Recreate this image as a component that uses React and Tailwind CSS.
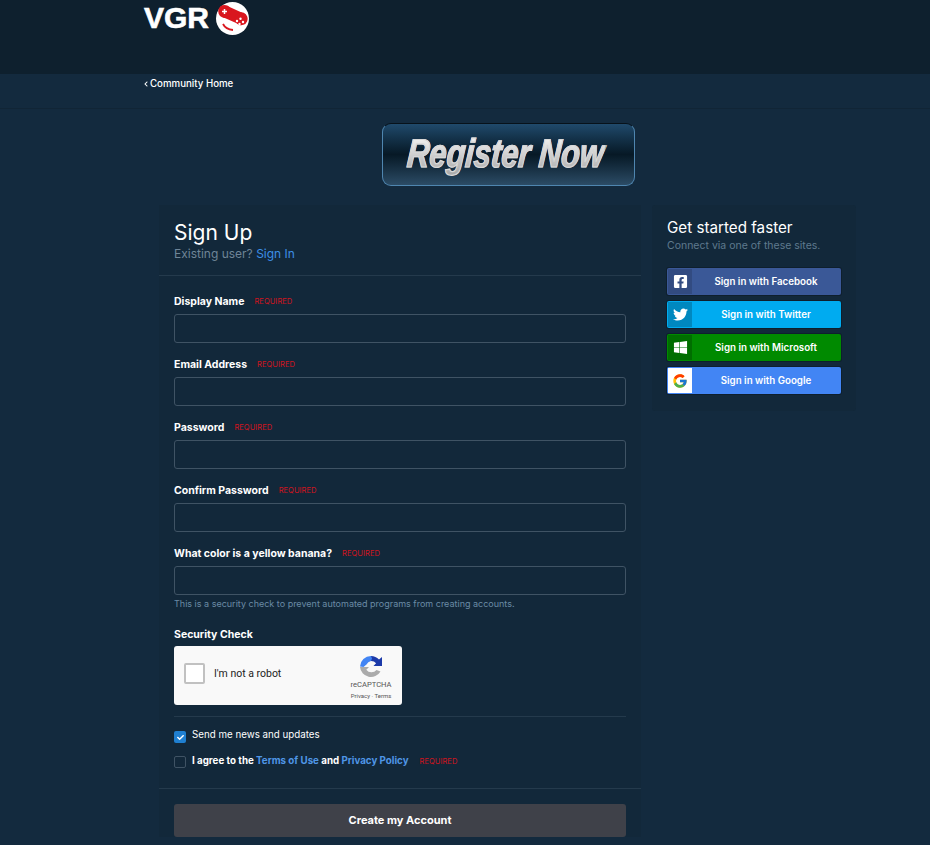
import React from "react";
import { FaFacebookSquare, FaTwitter, FaWindows, FaChevronLeft, FaCheck } from "react-icons/fa";
import { FcGoogle } from "react-icons/fc";

const fields = [
  { label: "Display Name" },
  { label: "Email Address" },
  { label: "Password" },
  { label: "Confirm Password" },
  { label: "What color is a yellow banana?" },
];

const socials = [
  { label: "Sign in with Facebook", bg: "bg-[#3a5897]", iconBg: "bg-[#324b81]", icon: <FaFacebookSquare className="text-[15px] text-white" /> },
  { label: "Sign in with Twitter", bg: "bg-[#00abf0]", iconBg: "bg-[#0088bf]", icon: <FaTwitter className="text-[15px] text-white" /> },
  { label: "Sign in with Microsoft", bg: "bg-[#008a00]", iconBg: "bg-[#006e00]", icon: <FaWindows className="text-[15px] text-white" /> },
  { label: "Sign in with Google", bg: "bg-[#4285f4]", iconBg: "bg-white", icon: <FcGoogle className="text-[16px]" /> },
];

function Required() {
  return <span className="text-[7.6px] font-normal uppercase text-[#d0141e]">Required</span>;
}

function ControllerLogo() {
  return (
    <svg width="33" height="33" viewBox="0 0 33 33" className="ml-[7px] mt-[2px]">
      <circle cx="16.5" cy="16.5" r="16.5" fill="#fff" />
      <g fill="#d9161e" transform="rotate(24 16.5 14)">
        <rect x="5" y="7" width="23" height="12" rx="4" />
        <circle cx="7.5" cy="13" r="6.5" />
        <circle cx="25.5" cy="13" r="6.5" />
      </g>
      <path d="M6 9.5h5M8.5 7v5" stroke="#fff" strokeWidth="1.5" />
      <circle cx="21" cy="19" r="1.2" fill="#fff" />
      <circle cx="24.5" cy="16.8" r="1.2" fill="#fff" />
      <circle cx="23.5" cy="22" r="1.2" fill="#fff" />
      <circle cx="27" cy="20" r="1.2" fill="#fff" />
      <path d="M7 22c1.5 3 5 5.5 10 6" fill="none" stroke="#d9161e" strokeWidth="1.8" />
    </svg>
  );
}

function RecaptchaLogo() {
  return (
    <svg width="24" height="24" viewBox="0 0 24 24">
      <path d="M12 1a11 11 0 0 1 8 3.5L23 2v9h-8.5l2.6-2.8A6.5 6.5 0 0 0 12 6z" fill="#1c3aa9" />
      <path d="M12 1A11 11 0 0 0 1 11.5l3.5.5 3-2.5A6.5 6.5 0 0 1 12 6l1-2.5z" fill="#4285f4" />
      <path d="M1 12h9l-2.7 2.7A6.5 6.5 0 0 0 17.5 15l4 1.5A11 11 0 0 1 1 12z" fill="#ababab" />
    </svg>
  );
}

export default function App() {
  return (
    <div className="h-[845px] overflow-hidden bg-[#132a3e] font-['Inter',sans-serif] text-white">
      <header className="h-[74px] bg-[#0e202e] pl-[144px]">
        <div className="flex items-start">
          <span className="mt-[3px] block h-[30px] font-['Liberation_Sans',sans-serif] text-[30px] font-bold leading-[30px] text-white [-webkit-text-stroke:0.6px_white]">
            VGR
          </span>
          <ControllerLogo />
        </div>
      </header>

      <nav className="h-[35px] border-b border-[#112536] pl-[144px] pt-[2px]">
        <a className="-ml-px flex items-center gap-[1px] text-[9.7px] font-medium leading-[16px] text-white">
          <FaChevronLeft className="text-[6px]" />
          Community Home
        </a>
      </nav>

      <div className="flex justify-center pl-[87px] pt-[14px]">
        <div className="flex h-[63px] w-[253px] items-center justify-center overflow-hidden rounded-[9px] border border-[#4f86b0] border-t-[#07121b] bg-gradient-to-b from-[#204a6c] via-[#071926] to-[#2c4c66]">
          <span className="mb-[4px] mr-[6px] inline-block -skew-x-6 scale-x-[0.77] whitespace-nowrap bg-gradient-to-b from-white to-[#a8a8a8] bg-clip-text font-['Liberation_Sans',sans-serif] text-[40px] font-bold italic leading-[44px] text-transparent [-webkit-text-stroke:1.2px_#d8d8d8]">
            Register Now
          </span>
        </div>
      </div>

      <main className="flex items-start gap-[11px] pl-[159px] pt-[19px]">
        <section className="w-[482px] bg-[#12283a]">
          <div className="h-[71px] border-b border-[#243a4c] px-[15px] pt-[14px]">
            <h1 className="text-[21px] font-normal leading-[28px]">Sign Up</h1>
            <p className="text-[12px] leading-[14px] text-[#6f8597]">
              Existing user? <a className="text-[#3d8fe6]">Sign In</a>
            </p>
          </div>

          <form className="px-[15px] pt-[18px]">
            {fields.map((field) => (
              <div key={field.label} className="mb-[14px]">
                <div className="mb-[4px] flex h-[16px] items-center gap-[10px]">
                  <label className="text-[10.5px] font-bold">{field.label}</label>
                  <Required />
                </div>
                <input
                  type="text"
                  className="block h-[29px] w-full rounded-[3px] border border-[#3f5364] bg-transparent"
                />
              </div>
            ))}
            <p className="-mt-[12px] text-[9px] leading-[14px] text-[#6a8ba5]">
              This is a security check to prevent automated programs from creating accounts.
            </p>

            <div className="mt-[16px] text-[10.5px] font-bold leading-[16px]">Security Check</div>
            <div className="mt-[3px] flex h-[59px] w-[228px] items-center rounded-[3px] bg-[#f9f9f9] pl-[10px] pr-[9px]">
              <div className="mb-[4px] h-[21px] w-[21px] rounded-[2px] border-2 border-[#c1c1c1] bg-white" />
              <span className="mb-[4px] ml-[9px] flex-1 font-['Roboto',sans-serif] text-[10.5px] text-[#222]">I'm not a robot</span>
              <div className="mt-[3px] flex w-[44px] flex-col items-center">
                <RecaptchaLogo />
                <span className="mt-[1px] font-['Roboto',sans-serif] text-[7.6px] leading-[10px] text-[#555]">reCAPTCHA</span>
                <span className="mt-[1px] whitespace-nowrap font-['Roboto',sans-serif] text-[6px] leading-[9px] text-[#555]">Privacy · Terms</span>
              </div>
            </div>
          </form>

          <div className="mx-[15px] mt-[11px] border-t border-[#243a4c] pt-[11px]">
            <label className="flex items-start gap-[6px] text-[9.75px] leading-[14px]">
              <span className="mt-[3px] flex h-[12px] w-[12px] items-center justify-center rounded-[2px] bg-[#1f7fd0]">
                <FaCheck className="text-[7px] text-white" />
              </span>
              Send me news and updates
            </label>
            <label className="mt-[11px] flex items-start gap-[6px] text-[9.75px] font-bold leading-[14px]">
              <span className="mt-[2px] h-[12px] w-[12px] rounded-[2px] border border-[#3f5364]" />
              <span>
                I agree to the <a className="text-[#4f96e6]">Terms of Use</a> and <a className="text-[#4f96e6]">Privacy Policy</a>
              </span>
              <span className="ml-[5px] leading-[13px]"><Required /></span>
            </label>
          </div>

          <div className="mt-[20px] border-t border-[#243a4c] px-[15px] pt-[15px]">
            <button type="button" className="h-[33px] w-full rounded-[3px] bg-[#3f4149] text-[11px] font-bold text-white">
              Create my Account
            </button>
          </div>
        </section>

        <aside className="h-[206px] w-[204px] rounded-[3px] bg-[#12283a] px-[15px] pt-[13px]">
          <h2 className="text-[15.2px] font-normal leading-[20px]">Get started faster</h2>
          <p className="text-[10.5px] leading-[15px] text-[#5f7a8e]">Connect via one of these sites.</p>
          <div className="mt-[15px] flex flex-col gap-[6px]">
            {socials.map((s) => (
              <a key={s.label} className={`flex h-[27px] items-stretch overflow-hidden rounded-[2px] p-px shadow-[0_0_0_1px_#0e1f2d] ${s.bg}`}>
                <span className={`flex w-[24px] items-center justify-center ${s.iconBg}`}>{s.icon}</span>
                <span className="flex flex-1 items-center justify-center pt-[2px] text-[9.75px] font-semibold text-white">{s.label}</span>
              </a>
            ))}
          </div>
        </aside>
      </main>
    </div>
  );
}
